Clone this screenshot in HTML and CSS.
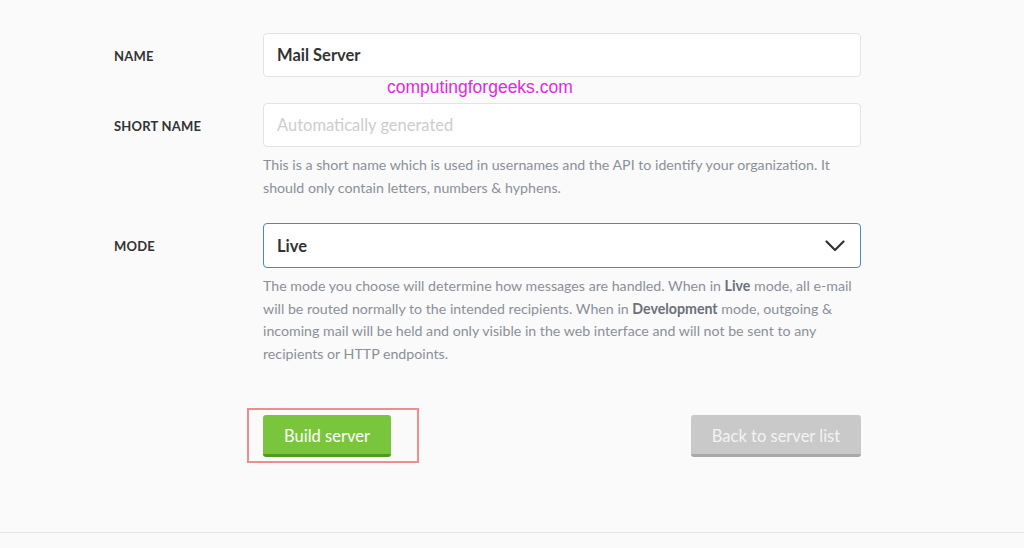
FILE: index.html
```
<!DOCTYPE html>
<html>
<head>
<meta charset="utf-8">
<link rel="stylesheet" href="styles.css">
</head>
<body>
<div class="page">
  <form class="form">
    <div class="row">
      <label class="label">NAME</label>
      <div class="field">
        <div class="input value">Mail Server</div>
      </div>
    </div>
    <div class="row row-short">
      <label class="label">SHORT NAME</label>
      <div class="field">
        <div class="input placeholder">Automatically generated</div>
        <p class="help">This is a short name which is used in usernames and the API to identify your organization. It should only contain letters, numbers &amp; hyphens.</p>
      </div>
    </div>
    <div class="row row-mode">
      <label class="label">MODE</label>
      <div class="field">
        <div class="input select value">
          <span>Live</span>
          <svg class="chev" width="20" height="12" viewBox="0 0 20 12"><path d="M1.5 1.5 L10 10 L18.5 1.5" fill="none" stroke="#333" stroke-width="2.2" stroke-linecap="round" stroke-linejoin="round"/></svg>
        </div>
        <p class="help">The mode you choose will determine how messages are handled. When in <b>Live</b> mode, all e-mail will be routed normally to the intended recipients. When in <b>Development</b> mode, outgoing &amp; incoming mail will be held and only visible in the web interface and will not be sent to any recipients or HTTP endpoints.</p>
      </div>
    </div>
    <div class="row row-buttons">
      <div></div>
      <div class="buttons">
        <span class="highlight"><button type="button" class="btn btn-green">Build server</button></span>
        <button type="button" class="btn btn-gray">Back to server list</button>
      </div>
    </div>
  </form>
  <div class="watermark">computingforgeeks.com</div>
  <div class="footer-line"></div>
</div>
</body>
</html>
```

FILE: styles.css
```
html, body {
  margin: 0;
  padding: 0;
  background: #fafafa;
}
body {
  font-family: "Lato", "Open Sans", sans-serif;
  color: #333;
  width: 1024px;
  height: 548px;
  overflow: hidden;
}
.page {
  position: relative;
  padding-top: 33px;
  height: 515px;
}
.form {
  margin-left: 114px;
  width: 747px;
}
.row {
  display: grid;
  grid-template-columns: 149px 598px;
}
.row-short { margin-top: 26px; }
.row-mode { margin-top: 24px; }
.row-buttons { margin-top: 49px; }
.label {
  font-size: 13px;
  font-weight: 700;
  color: #333;
  height: 44px;
  line-height: 46px;
  letter-spacing: 0.2px;
}
.input {
  box-sizing: border-box;
  height: 44px;
  border: 1px solid #e3e3e3;
  border-radius: 4px;
  background: #fff;
  padding: 0 13px;
  display: flex;
  align-items: center;
  font-size: 16.5px;
}
.value {
  font-weight: 700;
  color: #333;
}
.placeholder {
  color: #cdcdcd;
  font-weight: 400;
}
.select {
  height: 45px;
  border: 1px solid #4a8ac4;
  justify-content: space-between;
  padding-right: 15px;
}
.chev { display: block; }
.help {
  margin: 7px 0 0;
  font-size: 14.2px;
  line-height: 22.6px;
  color: #8b9098;
}
.help b {
  color: #6b7079;
  font-weight: 700;
}
.buttons {
  display: flex;
  justify-content: space-between;
  align-items: center;
}
.highlight {
  display: block;
  margin: -7px 0 -6px -16px;
  padding: 5px 26px 4px 14px;
  border: 2px solid #f28b8b;
}
.btn {
  display: block;
  box-sizing: border-box;
  height: 42px;
  border: 0;
  border-radius: 3px;
  font-family: inherit;
  font-size: 16.5px;
  padding: 3px 0 0;
  color: #fff;
  white-space: nowrap;
  text-align: center;
  cursor: pointer;
}
.btn-green {
  background: #79c63c;
  border-bottom: 3px solid #4f9a23;
  width: 128px;
}
.btn-gray {
  background: #c9c9c9;
  border-bottom: 3px solid #a9a9a9;
  color: #f3f3f3;
  width: 170px;
}
.watermark {
  position: absolute;
  left: 387px;
  top: 77px;
  font-family: "Liberation Sans", Arial, sans-serif;
  font-size: 17.5px;
  color: #e02ae0;
}
.footer-line {
  position: absolute;
  left: 0;
  right: 0;
  top: 532px;
  height: 1px;
  background: #e6e6e6;
}
```
